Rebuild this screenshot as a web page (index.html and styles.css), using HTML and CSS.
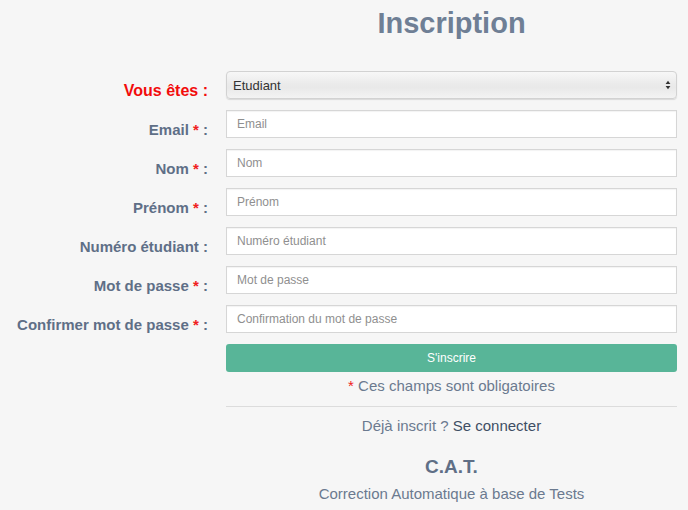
FILE: index.html
```html
<!DOCTYPE html>
<html lang="fr">
<head>
<meta charset="utf-8">
<title>Inscription</title>
<link rel="stylesheet" href="styles.css">
</head>
<body>
<div class="page">
  <form class="form">
    <div class="spacer"></div>
    <h1 class="title">Inscription</h1>

    <label class="label label-red" for="type">Vous êtes :</label>
    <div class="select-wrap">
      <select id="type" class="select">
        <option>Etudiant</option>
        <option>Enseignant</option>
      </select>
      <svg class="select-arrows" width="6" height="10" viewBox="0 0 6 10"><path d="M3 0.8 L5.4 4 H0.6 Z M3 9.2 L5.4 6 H0.6 Z" fill="#333"/></svg>
    </div>

    <label class="label" for="email">Email <span class="req">*</span> :</label>
    <input id="email" class="input" type="text" placeholder="Email">

    <label class="label" for="nom">Nom <span class="req">*</span> :</label>
    <input id="nom" class="input" type="text" placeholder="Nom">

    <label class="label" for="prenom">Prénom <span class="req">*</span> :</label>
    <input id="prenom" class="input" type="text" placeholder="Prénom">

    <label class="label" for="num">Numéro étudiant :</label>
    <input id="num" class="input" type="text" placeholder="Numéro étudiant">

    <label class="label" for="mdp">Mot de passe <span class="req">*</span> :</label>
    <input id="mdp" class="input" type="text" placeholder="Mot de passe">

    <label class="label" for="mdp2">Confirmer mot de passe <span class="req">*</span> :</label>
    <input id="mdp2" class="input" type="text" placeholder="Confirmation du mot de passe">

    <div class="spacer"></div>
    <div class="bottom">
      <button type="button" class="btn">S'inscrire</button>
      <p class="note"><span class="req">*</span> Ces champs sont obligatoires</p>
      <hr class="sep">
      <p class="login">Déjà inscrit ? <a class="login-link" href="#">Se connecter</a></p>
      <p class="brand">C.A.T.</p>
      <p class="tagline">Correction Automatique à base de Tests</p>
    </div>
  </form>
</div>
</body>
</html>
```

FILE: styles.css
```css
html, body {
  margin: 0;
  padding: 0;
  background: #f6f6f6;
  font-family: "Liberation Sans", Arial, Helvetica, sans-serif;
}

.page {
  width: 688px;
  height: 510px;
  overflow: hidden;
}

.form {
  display: grid;
  grid-template-columns: 208px 451px;
  column-gap: 18px;
  row-gap: 11px;
  align-items: start;
}

.title {
  margin: 0 0 20px;
  padding-top: 6px;
  font-size: 29px;
  line-height: 34px;
  font-weight: bold;
  color: #6f7f95;
  text-align: center;
}

.label {
  box-sizing: border-box;
  height: 28px;
  text-align: right;
  font-size: 15px;
  line-height: 17px;
  font-weight: bold;
  color: #5f6f87;
  padding-top: 11px;
  white-space: nowrap;
}

.label-red {
  color: #f20c0c;
  font-size: 16px;
}

.req {
  color: #f02020;
}

.select-wrap {
  position: relative;
  height: 28px;
}

.select {
  appearance: none;
  -webkit-appearance: none;
  box-sizing: border-box;
  width: 100%;
  height: 28px;
  margin: 0;
  padding: 0 20px 0 6px;
  font-family: "Liberation Sans", Arial, sans-serif;
  font-size: 13px;
  color: #333;
  border: 1px solid #d2d2d2;
  border-radius: 4px;
  background: linear-gradient(#f7f7f7, #ebebeb 45%, #e9e9e9 60%, #f3f3f3);
  box-shadow: 0 1px 1px rgba(0, 0, 0, 0.12);
}

.select-arrows {
  position: absolute;
  right: 6px;
  top: 9px;
}

.input {
  box-sizing: border-box;
  width: 100%;
  height: 28px;
  margin: 0;
  padding: 0 10px;
  font-family: "Liberation Sans", Arial, sans-serif;
  font-size: 12px;
  color: #333;
  background: #fff;
  border: 1px solid #d6d6d6;
  border-radius: 0;
  box-shadow: inset 0 1px 1px rgba(0, 0, 0, 0.05);
}

.input::placeholder {
  color: #8f8f8f;
}

.bottom {
  display: flex;
  flex-direction: column;
  align-items: stretch;
  text-align: center;
}

.btn {
  height: 28px;
  margin: 0;
  border: none;
  border-radius: 3px;
  background: #58b598;
  color: #fff;
  font-family: "Liberation Sans", Arial, sans-serif;
  font-size: 12px;
  cursor: pointer;
}

.note {
  margin: 4px 0 0;
  font-size: 15px;
  line-height: 20px;
  color: #6b7a8f;
}

.sep {
  width: 100%;
  margin: 10px 0 0;
  border: none;
  border-top: 1px solid #dcdcdc;
  height: 0;
}

.login {
  margin: 9px 0 0;
  font-size: 15px;
  line-height: 20px;
  color: #6b7a8f;
}

.login-link {
  color: #3e4e64;
  text-decoration: none;
}

.brand {
  margin: 19px 0 0;
  font-size: 19px;
  line-height: 24px;
  font-weight: bold;
  color: #5f6f86;
}

.tagline {
  margin: 5px 0 0;
  font-size: 15px;
  line-height: 20px;
  color: #6b7a8f;
}
```
